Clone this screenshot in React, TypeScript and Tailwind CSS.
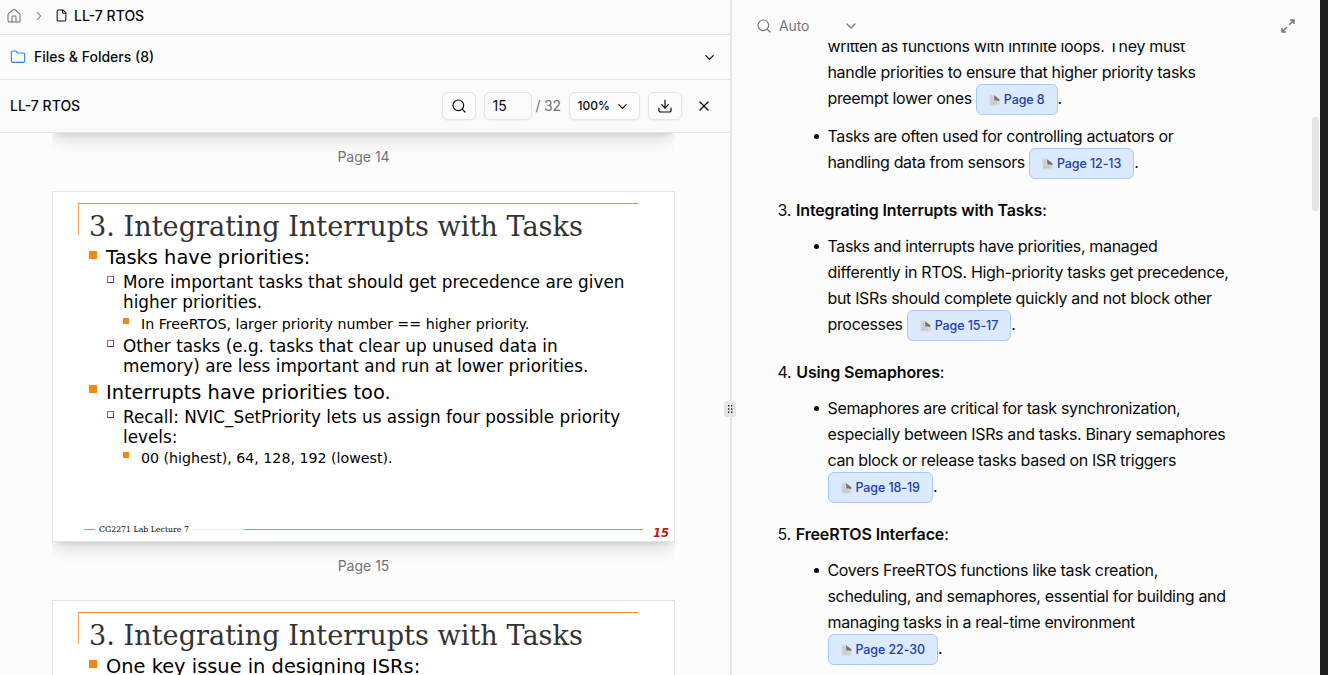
import React from 'react';
import { House, ChevronRight, ChevronDown, File, Folder, Search, Download, X } from 'lucide-react';

interface Topic {
  number?: number;
  title?: string;
  bullets: { lines: string[]; last: string; page: string; continued?: boolean }[];
}

const topics: Topic[] = [
  {
    bullets: [
      {
        lines: ['written as functions with infinite loops. They must', 'handle priorities to ensure that higher priority tasks'],
        last: 'preempt lower ones',
        page: 'Page 8',
        continued: true,
      },
      { lines: ['Tasks are often used for controlling actuators or'], last: 'handling data from sensors', page: 'Page 12-13' },
    ],
  },
  {
    number: 3,
    title: 'Integrating Interrupts with Tasks',
    bullets: [
      {
        lines: [
          'Tasks and interrupts have priorities, managed',
          'differently in RTOS. High-priority tasks get precedence,',
          'but ISRs should complete quickly and not block other',
        ],
        last: 'processes',
        page: 'Page 15-17',
      },
    ],
  },
  {
    number: 4,
    title: 'Using Semaphores',
    bullets: [
      {
        lines: [
          'Semaphores are critical for task synchronization,',
          'especially between ISRs and tasks. Binary semaphores',
          'can block or release tasks based on ISR triggers',
        ],
        last: '',
        page: 'Page 18-19',
      },
    ],
  },
  {
    number: 5,
    title: 'FreeRTOS Interface',
    bullets: [
      {
        lines: [
          'Covers FreeRTOS functions like task creation,',
          'scheduling, and semaphores, essential for building and',
          'managing tasks in a real-time environment',
        ],
        last: '',
        page: 'Page 22-30',
      },
    ],
  },
];

const PageIcon: React.FC = () => (
  <svg width="11" height="12" viewBox="0 0 11 12" className="shrink-0">
    <path d="M0.5 0.5H5L10.5 5.5V11.5H0.5Z" fill="#d6d6d6" />
    <path d="M5 1.2L10.3 5.2V7.2L8 6.4L5.4 6.6Z" fill="#707276" />
    <path d="M1.5 3.5H4M1.5 5.5H4M1.5 7.8H7M1.5 9.6H8" stroke="#b9babc" strokeWidth="0.7" />
  </svg>
);

const PageChip: React.FC<{ label: string }> = ({ label }) => (
  <span className="-mt-px flex h-[31px] items-center gap-1 rounded-md border border-[#a5cbfc] bg-blue-100 px-3 text-[12.5px] font-medium tracking-[-0.1px] text-[#1e40af]">
    <PageIcon />
    {label}
  </span>
);

const TopicSection: React.FC<{ topic: Topic }> = ({ topic }) => (
  <section className="mb-[18px]">
    {topic.title && (
      <h3 className="mb-[10px] flex h-[26px] items-center">
        <span className="mr-[5px]">{topic.number}.</span>
        <strong className="font-semibold tracking-[-0.14px]">{topic.title}</strong>:
      </h3>
    )}
    <ul className="flex flex-col gap-2 pl-[50px]">
      {topic.bullets.map(bullet => (
        <li key={bullet.page} className="relative">
          {!bullet.continued && <span className="absolute top-[11px] -left-[14px] size-[5px] rounded-full bg-black" />}
          {bullet.lines.map(line => (
            <p key={line} className="h-[26px] whitespace-nowrap">{line}</p>
          ))}
          <p className="flex h-[30px] items-start whitespace-nowrap">
            {bullet.last && <span className="mr-1">{bullet.last}</span>}
            <PageChip label={bullet.page} />.
          </p>
        </li>
      ))}
    </ul>
  </section>
);

const ChatPanel: React.FC = () => (
  <main className="flex min-w-0 flex-1 flex-col">
    <header className="flex h-[43px] shrink-0 items-center pt-[9px] pr-[25px] pl-6 text-[#737373]">
      <Search size={16} strokeWidth={1.7} />
      <span className="ml-[7px] text-sm tracking-[-0.1px]">Auto</span>
      <ChevronDown size={16} strokeWidth={1.8} className="ml-[34px]" />
      <svg width="14" height="14" viewBox="0 0 14 14" className="ml-auto" fill="none" stroke="currentColor" strokeWidth="1.4">
        <path d="M9 1H13V5M13 1L8.2 5.8M5 13H1V9M1 13L5.8 8.2" />
      </svg>
    </header>
    <div className="flex min-h-0 flex-1 justify-between overflow-hidden">
      <div className="-mt-[10px] pl-[45.5px] text-base leading-[26px] tracking-[-0.34px]">
        {topics.map(topic => (
          <TopicSection key={topic.title ?? 'top'} topic={topic} />
        ))}
      </div>
      <div className="mt-[74px] mr-px h-[94px] w-[7px] rounded-full bg-[#e5e5e5]" />
    </div>
  </main>
);

const Heading: React.FC<{ children: string }> = ({ children }) => (
  <div className="flex h-6 items-center gap-[9px] text-[19.4px]">
    <span className="mb-[7px] size-2 bg-[#f5870f]" />
    {children}
  </div>
);

const SubItem: React.FC<{ lines: string[] }> = ({ lines }) => (
  <div className="flex gap-[9px] pl-[18px] text-[16.84px] leading-5">
    <span className="mt-1 size-[7px] border border-t-[#777] border-r-[#9b3644] border-b-[#a01e2e] border-l-[#777]" />
    <div>
      {lines.map(line => (
        <p key={line}>{line}</p>
      ))}
    </div>
  </div>
);

const DetailItem: React.FC<{ children: string }> = ({ children }) => (
  <div className="flex h-[22px] items-center gap-3 pl-[34px] text-[14.2px]">
    <span className="mb-[5px] size-[6px] bg-[#f5870f]" />
    {children}
  </div>
);

interface SlideProps {
  page: number;
  title?: string;
  children?: React.ReactNode;
}

const Slide: React.FC<SlideProps> = ({ page, title, children }) => (
  <div className="mb-6 overflow-x-clip">
    <div className="flex h-[351px] flex-col border border-[#e5e5e5] bg-white pt-[11px] pl-[25px] font-['DejaVu_Sans'] whitespace-nowrap text-black shadow-[0_10px_15px_-3px_rgba(0,0,0,0.13),0_4px_6px_-4px_rgba(0,0,0,0.13)]">
      {title && (
        <>
          <div className="flex h-8 w-[560px] shrink-0 border-t border-[#f28c28]">
            <div className="w-px bg-[#f9a45a]" />
            <h2 className="pt-[6px] pl-[10px] font-['DejaVu_Serif'] text-[27.14px] leading-[34px] text-[#333]">{title}</h2>
          </div>
          <div className="flex-1 pt-[11px] pl-[11px]">{children}</div>
          <div className="mb-1 flex h-4 shrink-0 items-center pl-[6px] font-['DejaVu_Serif'] text-[7.8px]">
            <div className="h-px w-[11px] shrink-0 bg-[#f5870f]" />
            <span className="mx-1 mt-px w-[88px]">CG2271 Lab Lecture 7</span>
            <div className="h-px w-[53px] shrink-0 bg-[#fdeee0]" />
            <div className="h-px w-[399px] shrink-0 bg-[#f28c28]" />
            <span className="mt-[7px] ml-[10px] font-['DejaVu_Sans'] text-[11.6px] leading-3 font-bold text-[#b91c1c] italic">{page}</span>
          </div>
        </>
      )}
    </div>
    <p className="pt-[14px] text-center text-sm text-[#737373]">Page {page}</p>
  </div>
);

const DocumentPanel: React.FC = () => (
  <aside className="flex w-[730px] shrink-0 flex-col text-sm">
    <nav className="flex h-[35px] shrink-0 items-center border-b border-[#e5e5e5] bg-[#fafafa] pb-[3px] pl-[6px] font-medium">
      <House size={16} strokeWidth={1.6} className="text-[#737373]" />
      <ChevronRight size={14} strokeWidth={1.8} className="ml-[10px] text-[#737373]" />
      <File size={13} strokeWidth={1.9} className="ml-[9px]" />
      <span className="ml-[6px]">LL-7 RTOS</span>
    </nav>
    <div className="flex h-[45px] shrink-0 items-center border-b border-[#e5e5e5] pr-[13px] pl-[10px] font-medium">
      <Folder size={16} strokeWidth={1.7} className="text-blue-500" />
      <span className="ml-2">Files & Folders (8)</span>
      <ChevronDown size={15} className="ml-auto" />
    </div>
    <div className="z-10 flex h-[53px] shrink-0 items-center border-b border-[#e5e5e5] bg-[#fafafa] pl-[10px]">
      <span className="w-[431.5px] font-medium">LL-7 RTOS</span>
      <button className="flex h-7 w-[34px] items-center justify-center rounded-md border border-[#e5e5e5] bg-[#fcfcfc] shadow-xs">
        <Search size={16} strokeWidth={1.8} />
      </button>
      <div className="ml-2 flex h-7 w-12 items-center rounded-md border border-[#e5e5e5] pl-2 shadow-xs">15</div>
      <span className="ml-1 w-[33px] tracking-[-0.2px] text-[#737373]">/ 32</span>
      <button className="flex h-7 w-[71px] items-center justify-between rounded-md border border-[#e5e5e5] bg-[#fcfcfc] pr-[9px] pl-2 text-xs font-medium shadow-xs">
        100%
        <ChevronDown size={15} />
      </button>
      <button className="ml-2 flex h-7 w-[34px] items-center justify-center rounded-md border border-[#e5e5e5] bg-[#fcfcfc] shadow-xs">
        <Download size={16} strokeWidth={1.8} />
      </button>
      <X size={16} strokeWidth={1.8} className="ml-[14px]" />
    </div>
    <div className="min-h-0 flex-1 overflow-hidden pr-[55px] pl-[52px]">
      <div className="-mt-[351px]">
        <Slide page={14} />
        <Slide page={15} title="3. Integrating Interrupts with Tasks">
          <Heading>Tasks have priorities:</Heading>
          <div className="pt-[2.4px] pb-[0.6px]">
            <SubItem lines={['More important tasks that should get precedence are given', 'higher priorities.']} />
          </div>
          <DetailItem>In FreeRTOS, larger priority number == higher priority.</DetailItem>
          <div className="pt-px">
            <SubItem lines={['Other tasks (e.g. tasks that clear up unused data in', 'memory) are less important and run at lower priorities.']} />
          </div>
          <div className="pt-[5px] pb-[2px]">
            <Heading>Interrupts have priorities too.</Heading>
          </div>
          <SubItem lines={['Recall: NVIC_SetPriority lets us assign four possible priority', 'levels:']} />
          <DetailItem>00 (highest), 64, 128, 192 (lowest).</DetailItem>
        </Slide>
        <Slide page={16} title="3. Integrating Interrupts with Tasks">
          <Heading>One key issue in designing ISRs:</Heading>
        </Slide>
      </div>
    </div>
  </aside>
);

const App: React.FC = () => (
  <div className="flex h-[675px] w-[1328px] overflow-hidden bg-[#fcfcfc] font-[Inter,sans-serif] text-[#0a0a0a]">
    <DocumentPanel />
    <div className="relative w-[2px] shrink-0 bg-[#e5e5e5]">
      <div className="absolute top-[401px] -left-[6px] z-20 flex h-4 w-3 items-center justify-center rounded-[3px] bg-[#e5e5e5]">
        <svg width="6" height="10" viewBox="0 0 6 10" fill="#222">
          <path d="M1 1h1.3v1.5H1zM4 1h1.3v1.5H4zM1 4.2h1.3v1.5H1zM4 4.2h1.3v1.5H4zM1 7.4h1.3v1.5H1zM4 7.4h1.3v1.5H4z" />
        </svg>
      </div>
    </div>
    <ChatPanel />
    <div className="w-2 shrink-0 bg-[#1f1f1f]" />
  </div>
);

export default App;
